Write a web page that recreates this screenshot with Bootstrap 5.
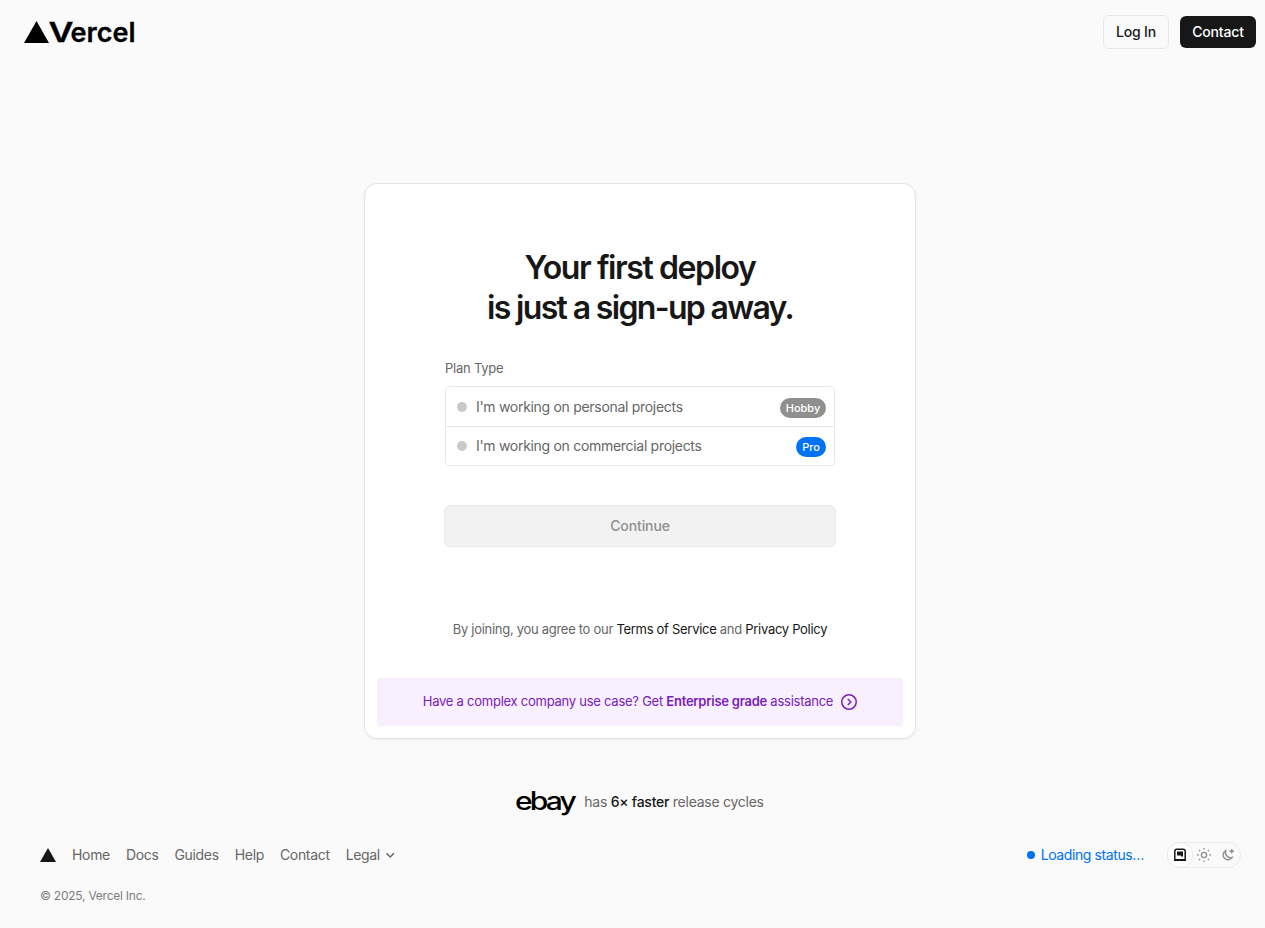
<!DOCTYPE html>
<html lang="en">
<head>
<meta charset="utf-8">
<meta name="viewport" content="width=device-width, initial-scale=1">
<title>Sign Up – Vercel</title>
<link href="https://cdn.jsdelivr.net/npm/bootstrap@5.3.0/dist/css/bootstrap.min.css" rel="stylesheet">
<style>
  html, body { overflow: hidden; }
  body { background: #fafafa; color: #171717; font-family: Inter, "Liberation Sans", sans-serif; font-size: 14px; line-height: 20px; }
  a { color: inherit; text-decoration: none; }
  svg { display: block; flex: none; overflow: visible; }
  .page { width: 1280px; height: 928px; }
  .topbar { height: 64px; padding: 0 24px; }
  .top-btn { --bs-btn-font-size: 14px; --bs-btn-font-weight: 500; --bs-btn-line-height: 20px; --bs-btn-padding-x: 11px; --bs-btn-padding-y: 6px; --bs-btn-border-radius: 6px; white-space: nowrap; letter-spacing: -.15px; }
  .btn-login { width: 66px; height: 34px; border-color: #e6e6e6; color: #171717; }
  .btn-contact { width: 76px; height: 32px; --bs-btn-padding-y: 5px; background: #171717; color: #fff; }
  .signup { width: 552px; height: 556px; margin-top: 119px; border: 1px solid #e3e3e3; border-radius: 13px; padding: 64px 12px 12px; box-shadow: 0 1px 2px rgba(0,0,0,.06); }
  .signup h1 { font-size: 32px; line-height: 40px; font-weight: 600; margin: 0; }
  .signup h1 span { display: block; }
  .h-a { letter-spacing: -1.42px; }
  .h-b { letter-spacing: -1.66px; }
  .form-area { width: 390px; }
  .plan-label { font-size: 13px; letter-spacing: -.24px; color: #666; margin-top: 30px; margin-bottom: 8px; }
  .plans { --bs-list-group-border-color: #e8e8e8; --bs-list-group-border-radius: 5px; height: 80px; letter-spacing: -.3px; }
  .plans .list-group-item { color: #666; padding: 0 8px 0 11px; height: 40px; }
  .plans .list-group-item:first-child { height: 41px; }
  .plans .list-group-item:last-child { height: 39px; }
  .dot { width: 10px; height: 10px; background: #c9c9c9; border-radius: 50%; margin-right: 9px; }
  .tag { height: 20px; font-size: 11px; line-height: 20px; font-weight: 500; letter-spacing: 0; padding: 0 5px; margin-top: 2px; }
  .tag-hobby { background: #8f8f8f; width: 46px; }
  .tag-pro { background: #0072f5; width: 30px; }
  .btn-continue { width: 392px; height: 42px; margin: 39px -1px 0; font-size: 14px; font-weight: 500; line-height: 20px; letter-spacing: -.1px; border-radius: 6px; }
  .btn-continue:disabled { background: #f2f2f2; border-color: #ebebeb; color: #8f8f8f; opacity: 1; }
  .legal-note { font-size: 13px; letter-spacing: -.29px; color: #666; margin-top: 72px; }
  .legal-note a { color: #171717; }
  .enterprise { height: 48px; margin-top: 39px; background: #f9f0ff; color: #7820bc; border-radius: 3px; font-size: 13px; letter-spacing: -.25px; gap: 8px; }
  .enterprise span { padding-bottom: 2px; }
  .quote { height: 28px; margin-top: 49px; color: #666; gap: 8px; letter-spacing: -.26px; }
  .quote strong { color: #171717; font-weight: 500; }
  .foot { padding: 0 39px 0 40px; margin-top: 26px; color: #666; height: 26px; }
  .foot-links { gap: 16px; letter-spacing: -.33px; }
  .status { color: #0070f3; gap: 6px; margin-right: 23px; letter-spacing: -.4px; }
  .status i { width: 8px; height: 8px; border-radius: 50%; background: #0070f3; }
  .themes { width: 74px; height: 26px; border: 1px solid #eaeaea; border-radius: 13px; color: #8f8f8f; }
  .themes span { width: 24px; height: 24px; display: grid; place-items: center; border-radius: 50%; }
  .themes .on { background: #fff; color: #171717; box-shadow: 0 0 0 1px #ebebeb; }
  .copy { font-size: 12px; letter-spacing: -.24px; color: #7d7d7d; padding-left: 40px; margin-top: 18px; }
</style>
</head>
<body>
<div class="page d-flex flex-column">
  <header class="topbar d-flex align-items-center justify-content-between">
    <a href="#" aria-label="Vercel"><svg width="116" height="40" viewBox="0 -8 116 40"><path d="M12.5 1 25 23H0Z" fill="#000"/><g font-size="27" font-weight="600" fill="#000" stroke="#000" stroke-width=".3"><text x="24.5" y="22.2" textLength="25" lengthAdjust="spacingAndGlyphs">V</text><text x="46.5" y="22.2" textLength="65" lengthAdjust="spacingAndGlyphs">ercel</text></g></svg></a>
    <div class="d-flex align-items-center" style="gap:11px">
      <a class="btn top-btn btn-login" href="#">Log In</a>
      <a class="btn top-btn btn-contact" href="#">Contact</a>
    </div>
  </header>

  <main class="card signup align-self-center">
    <h1 class="text-center"><span class="h-a">Your first deploy</span><span class="h-b">is just a sign-up away.</span></h1>
    <div class="form-area mx-auto">
      <div class="plan-label">Plan Type</div>
      <div class="list-group plans">
        <label class="list-group-item d-flex align-items-center"><span class="dot"></span><span>I'm working on personal projects</span><span class="badge rounded-pill tag tag-hobby ms-auto">Hobby</span></label>
        <label class="list-group-item d-flex align-items-center"><span class="dot"></span><span>I'm working on commercial projects</span><span class="badge rounded-pill tag tag-pro ms-auto">Pro</span></label>
      </div>
      <button class="btn btn-continue" disabled>Continue</button>
    </div>
    <p class="legal-note text-center mb-0">By joining, you agree to our <a href="#">Terms of Service</a> and <a href="#">Privacy Policy</a></p>
    <a class="enterprise d-flex align-items-center justify-content-center" href="#">
      <span>Have a complex company use case? Get <b class="fw-semibold">Enterprise grade</b> assistance</span>
      <svg width="16" height="16" viewBox="0 0 16 16" fill="none" stroke="currentColor" stroke-width="1.5"><circle cx="8" cy="8" r="7.25"/><path d="m6.8 5 3 3-3 3"/></svg>
    </a>
  </main>

  <div class="quote d-flex align-items-center justify-content-center">
    <svg width="60" height="40" viewBox="0 -6 60 40" role="img" aria-label="ebay"><text x="-1" y="21.5" font-size="25" font-weight="500" letter-spacing="-2.4" textLength="59" lengthAdjust="spacingAndGlyphs" fill="#000">ebay</text></svg>
    <span>has <strong>6× faster</strong> release cycles</span>
  </div>

  <footer>
    <div class="foot d-flex align-items-center justify-content-between">
      <nav class="foot-links d-flex align-items-center">
        <svg width="16" height="16" viewBox="0 0 16 16"><path d="M8 1 16 15H0Z" fill="#171717"/></svg>
        <a href="#">Home</a><a href="#">Docs</a><a href="#">Guides</a><a href="#">Help</a><a href="#">Contact</a>
        <a href="#" class="d-flex align-items-center"><span>Legal</span><svg class="ms-1" width="12" height="12" viewBox="0 0 12 12" fill="none" stroke="currentColor" stroke-width="1.4"><path d="m2.4 4.2 3.8 3.8L10 4.2"/></svg></a>
      </nav>
      <div class="d-flex align-items-center">
        <a class="status d-flex align-items-center" href="#"><i></i><span>Loading status…</span></a>
        <div class="themes d-flex">
          <span class="on"><svg width="12" height="14" viewBox="0 0 12 14"><path d="M.8 12V3.2Q.8 1.2 2.8 1.2h6.4q2 0 2 2V12" fill="none" stroke="currentColor" stroke-width="1.5"/><path d="M3 3.6h6v5H7V7.6H3Z" fill="currentColor"/><path d="M0 12h12" stroke="currentColor" stroke-width="2"/></svg></span>
          <span><svg width="14" height="14" viewBox="0 0 14 14" fill="none" stroke="currentColor" stroke-width="1.4"><circle cx="7" cy="7" r="2.6"/><path d="M7 0v1.6M7 12.4V14M0 7h1.6M12.4 7H14M2 2l1.1 1.1M10.9 10.9 12 12M12 2l-1.1 1.1M3.1 10.9 2 12"/></svg></span>
          <span><svg width="14" height="14" viewBox="0 0 14 14" fill="none" stroke="currentColor" stroke-width="1.4"><path d="M4.6 2.6a4.9 4.9 0 1 0 6.6 6.8A5.4 5.4 0 0 1 4.6 2.6Z"/><path d="M10.7 1v4.6M8.4 3.3H13"/></svg></span>
        </div>
      </div>
    </div>
    <div class="copy">© 2025, Vercel Inc.</div>
  </footer>
</div>
<script src="https://cdn.jsdelivr.net/npm/bootstrap@5.3.0/dist/js/bootstrap.bundle.min.js"></script>
</body>
</html>
